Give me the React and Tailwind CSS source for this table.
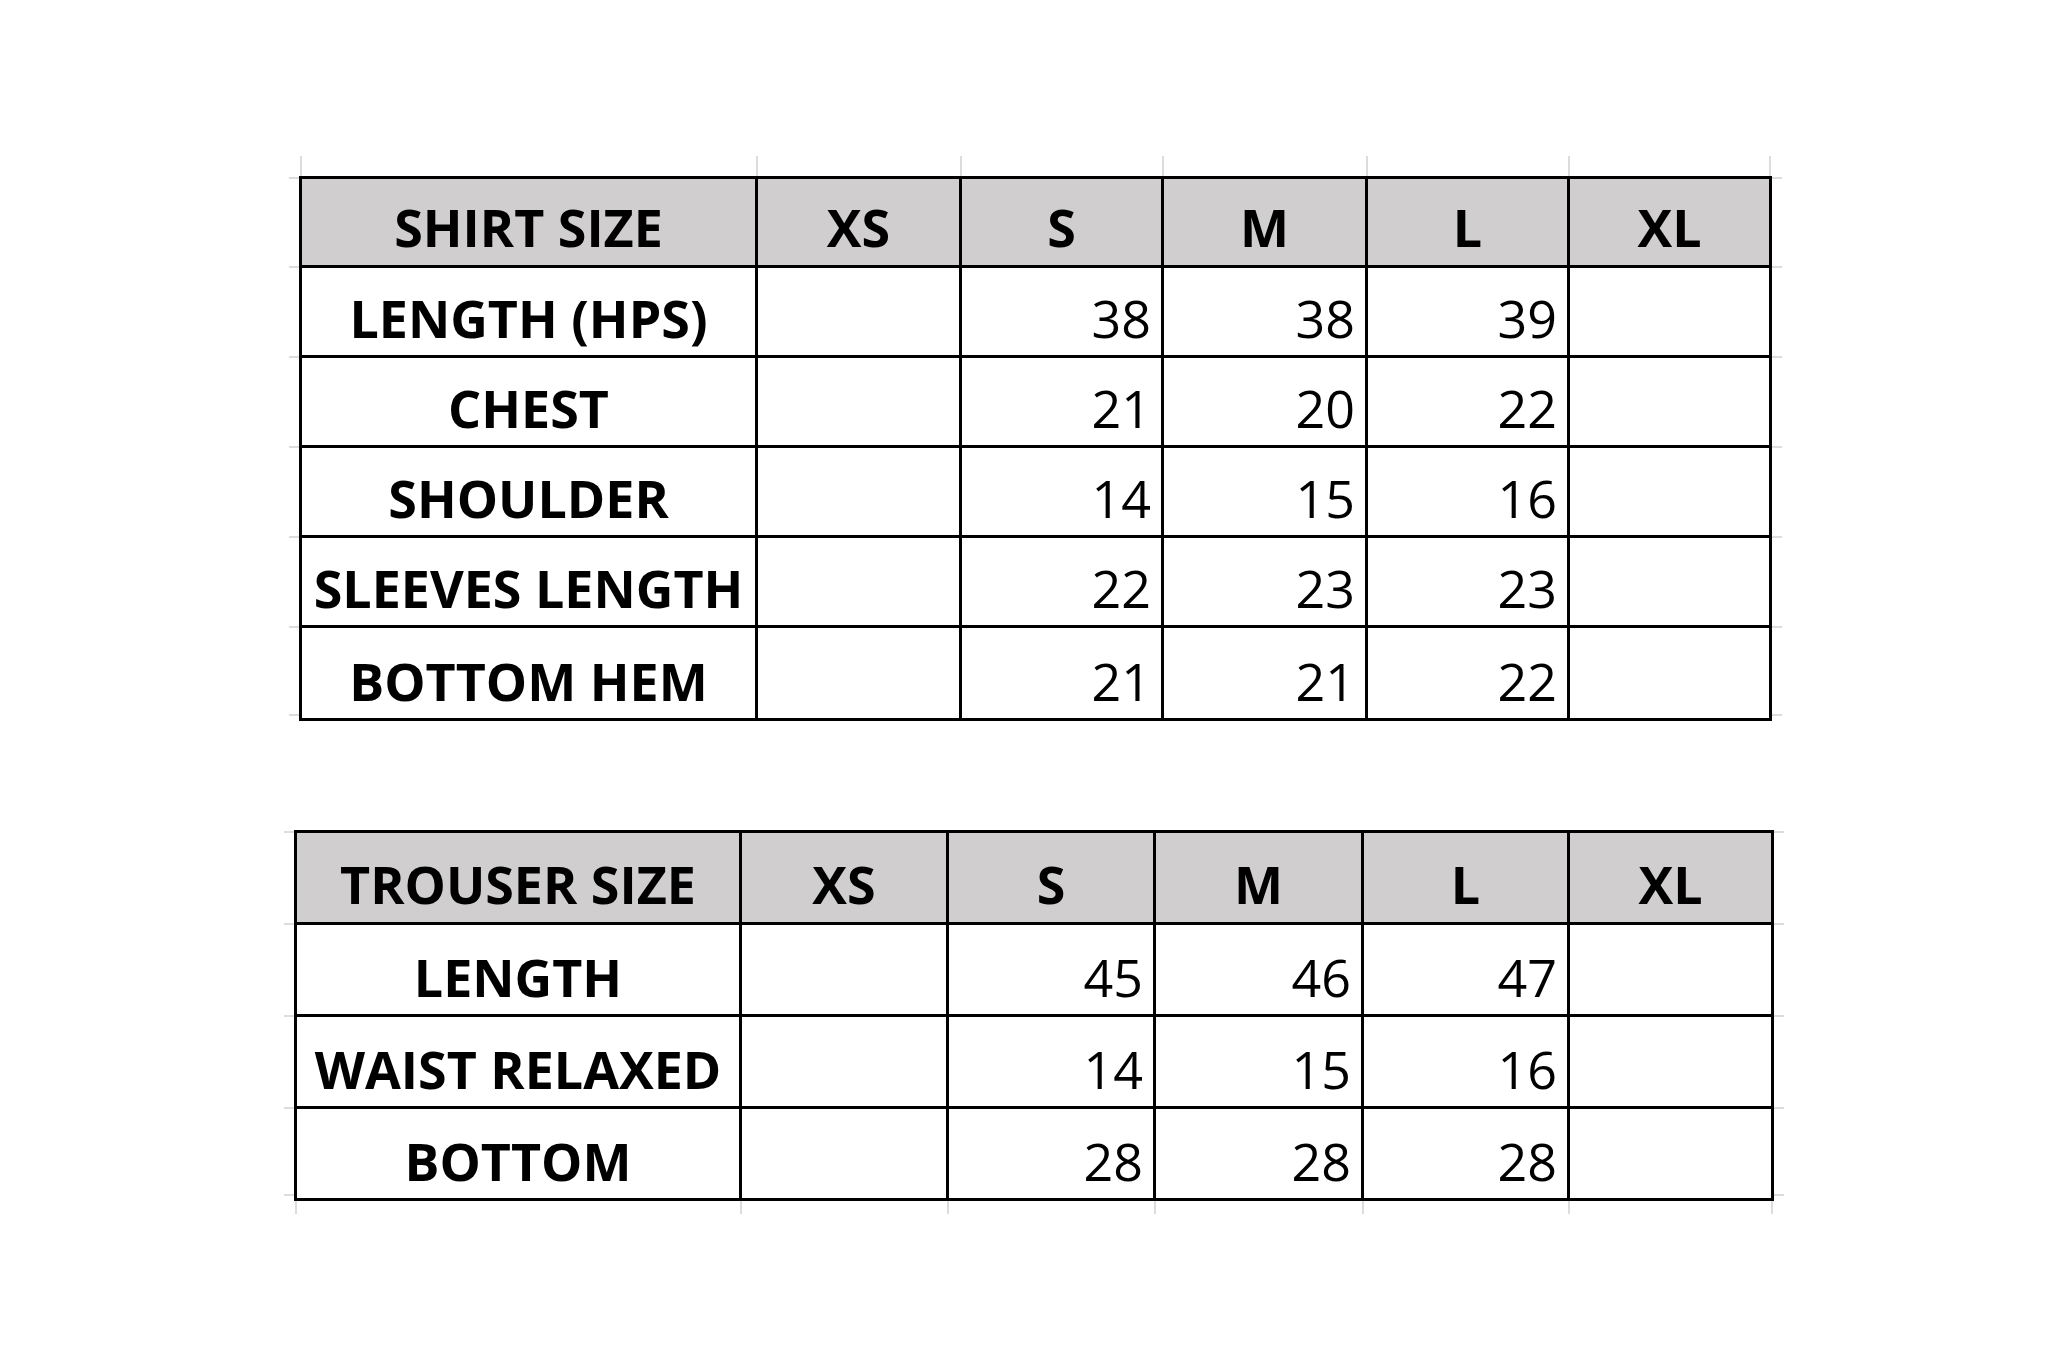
const shirt = {
  gridCols: 'grid-cols-[456px_204px_202px_204px_202px_199px]',
  rowH: ['h-[89px]', 'h-[90px]', 'h-[90px]', 'h-[90px]', 'h-[90px]', 'h-[90px]'],
  head: ['SHIRT SIZE', 'XS', 'S', 'M', 'L', 'XL'],
  body: [
    ['LENGTH (HPS)', '', '38', '38', '39', ''],
    ['CHEST', '', '21', '20', '22', ''],
    ['SHOULDER', '', '14', '15', '16', ''],
    ['SLEEVES LENGTH', '', '22', '23', '23', ''],
    ['BOTTOM HEM', '', '21', '21', '22', ''],
  ],
  top: true,
  bottom: false,
};

const trouser = {
  gridCols: 'grid-cols-[445px_207px_207px_208px_206px_201px]',
  rowH: ['h-[92px]', 'h-[92px]', 'h-[92px]', 'h-[89px]'],
  head: ['TROUSER SIZE', 'XS', 'S', 'M', 'L', 'XL'],
  body: [
    ['LENGTH', '', '45', '46', '47', ''],
    ['WAIST RELAXED', '', '14', '15', '16', ''],
    ['BOTTOM', '', '28', '28', '28', ''],
  ],
  top: false,
  bottom: true,
};

// faint excel gridline stubs sticking out of the framed area
function TickRow({ sheet, h }) {
  return (
    <div className="flex pl-[11px]">
      <div className={'grid ' + h + ' ' + sheet.gridCols}>
        {sheet.head.map((_, j) => (
          <div key={j} className={'border-l-2 border-[#dcdcdc] ' + (j === 5 ? 'border-r-2 -mr-[4px]' : '')} />
        ))}
      </div>
    </div>
  );
}

function TickCol({ sheet }) {
  return (
    <div className="w-[10px] flex flex-col pt-[1px]">
      {sheet.rowH.map((h, i) => (
        <div key={i} className={h + ' border-t-2 border-[#dcdcdc] ' + (i === sheet.rowH.length - 1 ? 'border-b-2' : '')} />
      ))}
    </div>
  );
}

function Sheet({ sheet, className }) {
  const last = sheet.body.length - 1;
  return (
    <div className={'flex flex-col ' + className}>
      {sheet.top && <TickRow sheet={sheet} h="h-[20px]" />}
      <div className="flex">
        <TickCol sheet={sheet} />
        <div className={'grid border-[3px] border-black ' + sheet.gridCols}>
          {sheet.head.map((c, j) => (
            <div
              key={'h' + j}
              className={
                'bg-[#d0cece] border-b-[3px] border-black flex items-end justify-center pb-[12px] font-bold text-[52px] leading-none ' +
                sheet.rowH[0] + ' ' +
                (j < 5 ? 'border-r-[3px]' : '')
              }
            >
              {c}
            </div>
          ))}
          {sheet.body.map((row, i) =>
            row.map((c, j) => (
              <div
                key={i + '-' + j}
                className={
                  'border-black flex items-end pb-[11px] text-[52px] leading-none ' +
                  sheet.rowH[i + 1] + ' ' +
                  (j === 0 ? 'justify-center font-bold ' : 'justify-end pr-[10px] ') +
                  (j < 5 ? 'border-r-[3px] ' : '') +
                  (i < last ? 'border-b-[3px]' : '')
                }
              >
                {c}
              </div>
            ))
          )}
        </div>
        <TickCol sheet={sheet} />
      </div>
      {sheet.bottom && <TickRow sheet={sheet} h="h-[13px]" />}
    </div>
  );
}

export default function App() {
  return (
    <div className="w-[2048px] h-[1367px] bg-white text-black font-['Open_Sans',sans-serif] pt-[156px] flex flex-col">
      <Sheet sheet={shirt} className="ml-[289px]" />
      <Sheet sheet={trouser} className="ml-[284px] mt-[109px]" />
    </div>
  );
}
